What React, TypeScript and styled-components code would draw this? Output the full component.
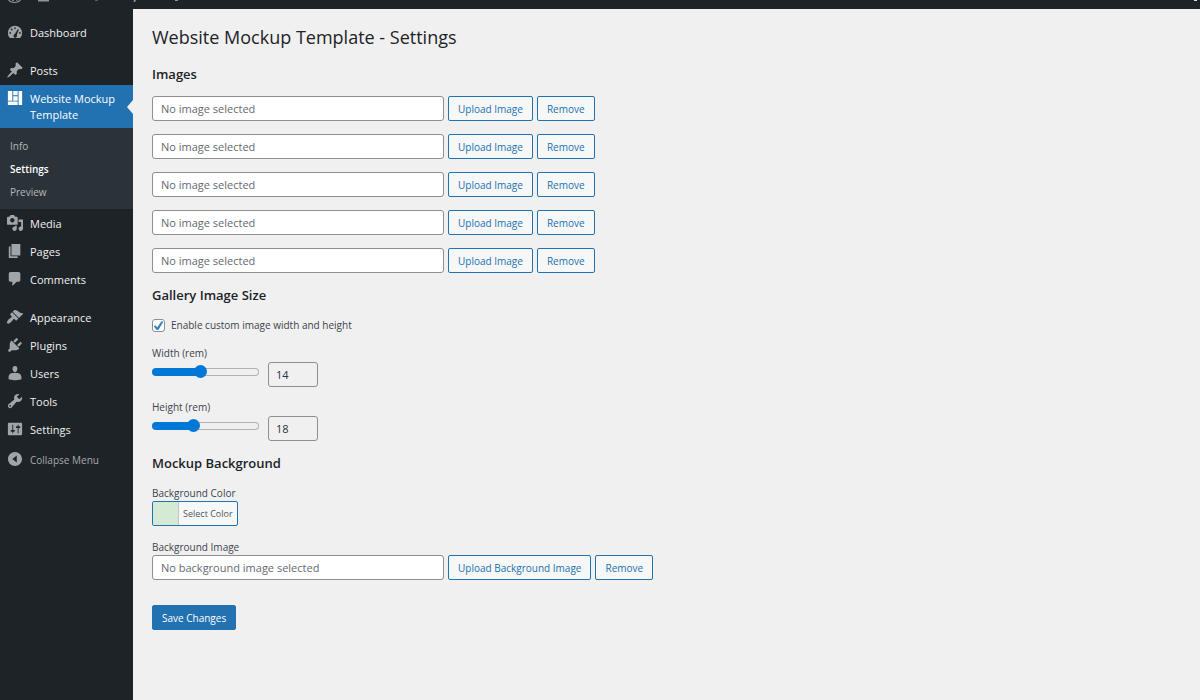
import React, { useState } from 'react';
import styled, { createGlobalStyle, css } from 'styled-components';

const GlobalStyle = createGlobalStyle`
  *, *::before, *::after { box-sizing: border-box; }
  body {
    margin: 0;
    background: #f0f0f1;
    color: #3c434a;
    font: 10px/16px "Segoe UI", "Open Sans", "Noto Sans", sans-serif;
  }
  button, input { font: inherit; color: inherit; }
`;

const Page = styled.div`
  min-height: 100vh;
  display: flex;
  flex-direction: column;
`;

const AdminBar = styled.header`
  height: 9px;
  flex: none;
  display: flex;
  justify-content: space-between;
  overflow: hidden;
  background: #1d2327;
`;

const BarArt = styled.svg`
  display: block;
  height: 9px;
`;

const Body = styled.div`
  flex: 1;
  display: flex;
`;

const Sidebar = styled.nav`
  width: 133px;
  flex: none;
  display: flex;
  flex-direction: column;
  gap: 10px;
  padding-top: 10px;
  background: #1d2327;
`;

const MenuGroup = styled.ul`
  margin: 0;
  padding: 0;
  list-style: none;
`;

const menuLook = css`
  position: relative;
  display: flex;
  align-items: flex-start;
  gap: 7px;
  width: 100%;
  border: 0;
  text-align: left;
  text-decoration: none;
  line-height: 16px;
`;

const MenuLink = styled.a<{ $current?: boolean }>`
  ${menuLook}
  padding: 6px 7px ${(p) => (p.$current ? 5 : 6)}px;
  font-size: 11px;
  color: ${(p) => (p.$current ? '#fff' : '#f0f0f1')};
  background: ${(p) => (p.$current ? '#2271b1' : 'transparent')};
  &::after {
    content: '';
    display: ${(p) => (p.$current ? 'block' : 'none')};
    position: absolute;
    right: 0;
    top: 50%;
    margin-top: -7px;
    border: 7px solid transparent;
    border-left: 0;
    border-right: 6px solid #f0f0f1;
  }
`;

const CollapseButton = styled.button`
  ${menuLook}
  padding: 8px 7px;
  font-size: 10px;
  color: #a7aaad;
  background: transparent;
`;

const MenuIcon = styled.svg<{ $bright?: boolean }>`
  width: 16px;
  height: 16px;
  flex: none;
  margin-top: -1px;
  fill: ${(p) => (p.$bright ? '#fff' : '#a0a5aa')};
`;

const SubMenu = styled.ul`
  margin: 0 0 1px;
  padding: 7px 0 5px;
  list-style: none;
  background: #2c3338;
`;

const SubLink = styled.a<{ $current?: boolean }>`
  display: block;
  padding: 4px 10px;
  line-height: 15px;
  color: ${(p) => (p.$current ? '#fff' : '#b4b9be')};
  font-weight: ${(p) => (p.$current ? 600 : 400)};
  text-decoration: none;
`;

const Main = styled.main`
  flex: 1;
  min-width: 0;
  padding: 16px 19px;
`;

const Title = styled.h1`
  margin: 0 0 15px;
  color: #1d2327;
  font-size: 18px;
  font-weight: 400;
  line-height: 24px;
`;

const SectionTitle = styled.h2`
  margin: 12px 0;
  color: #1d2327;
  font-size: 13px;
  font-weight: 600;
  line-height: 20px;
`;

const Fields = styled.div<{ $gap: number }>`
  display: flex;
  flex-direction: column;
  align-items: flex-start;
  gap: ${(p) => p.$gap}px;
`;

const Row = styled.div`
  display: flex;
  gap: 4px;
`;

const TextBox = styled.input`
  width: 292px;
  height: 25px;
  padding: 0 8px;
  border: 1px solid #8c8f94;
  border-radius: 3px;
  background: #fff;
  color: #2c3338;
  font-size: 11px;
  &::placeholder { color: #646970; opacity: 1; }
`;

const Button = styled.button<{ $primary?: boolean }>`
  height: 25px;
  padding: 0 9px;
  border: 1px solid #2271b1;
  border-radius: 2px;
  background: ${(p) => (p.$primary ? '#2271b1' : '#f6f7f7')};
  color: ${(p) => (p.$primary ? '#fff' : '#2271b1')};
  white-space: nowrap;
`;

const CheckLabel = styled.label`
  display: flex;
  align-items: center;
  gap: 6px;
`;

const CheckBox = styled.input`
  appearance: none;
  width: 13px;
  height: 13px;
  margin: 0;
  border: 1px solid #8c8f94;
  border-radius: 3px;
  background: #fff;
  &:checked {
    background: #fff url("data:image/svg+xml,%3Csvg xmlns='http://www.w3.org/2000/svg' viewBox='0 0 20 20'%3E%3Cpath d='M14.8 3.1l2.5 1.4-7.6 12.6H7.1l-4.2-5.4 2.1-1.9 3.2 3z' fill='%233582c4'/%3E%3C/svg%3E") center / 13px no-repeat;
  }
`;

const Field = styled.div`
  display: flex;
  flex-direction: column;
  align-items: flex-start;
`;

const Slider = styled.input<{ $fill: number }>`
  appearance: none;
  width: 107px;
  height: 14px;
  margin: 4px 0 0;
  background: transparent;
  &::-webkit-slider-runnable-track {
    height: 8px;
    border: 1px solid transparent;
    border-radius: 4px;
    background:
      linear-gradient(#0078d7, #0078d7) left / ${(p) => p.$fill}% 100% no-repeat border-box,
      linear-gradient(#efefef, #efefef) padding-box,
      linear-gradient(#b2b2b2, #b2b2b2) border-box;
  }
  &::-webkit-slider-thumb {
    appearance: none;
    width: 13px;
    height: 13px;
    margin-top: -4px;
    border-radius: 50%;
    background: #0078d7;
  }
`;

const SliderRow = styled.div`
  display: flex;
  align-items: flex-start;
  gap: 9px;
`;

const NumberBox = styled.input`
  width: 50px;
  height: 25px;
  margin-top: 1px;
  padding: 0 7px;
  border: 1px solid #8c8f94;
  border-radius: 3px;
  background: #f0f0f1;
  color: #2c3338;
  font-size: 11px;
`;

const ColorButton = styled.button`
  display: flex;
  height: 25px;
  padding: 0;
  overflow: hidden;
  border: 1px solid #2271b1;
  border-radius: 2px;
  background: #f6f7f7;
  color: #50575e;
  font-size: 9px;
  line-height: 23px;
`;

const Swatch = styled.span`
  width: 25px;
  height: 23px;
  background: #d4ead4;
`;

const ColorText = styled.span`
  padding: 0 4px;
  border-left: 1px solid #c3c4c7;
`;

const Submit = styled.div`
  margin-top: 25px;
`;

const icons = {
  dashboard:
    'M4.3 16.800h11.400A8 8 0 0 0 18 11a8 8 0 0 0-16 0 8 8 0 0 0 2.300 5.800zM10 4.600a1 1 0 1 1 0 2 1 1 0 0 1 0-2zM6.300 6.200a1 1 0 1 1 0 2 1 1 0 0 1 0-2zM13.400 6.600l.9.5-2.300 6.300a2 2 0 1 1-2.400-.9zM4.600 10a1 1 0 1 1 0 2 1 1 0 0 1 0-2zM15.500 10a1 1 0 1 1 0 2 1 1 0 0 1 0-2z',
  posts:
    'M10.44 3.02l1.82-1.82 6.36 6.35-1.83 1.82c-1.05-.68-2.48-.57-3.41.36l-.75.75c-.92.93-1.04 2.35-.35 3.41l-1.83 1.82-2.41-2.41-2.8 2.79c-.42.42-3.38 2.71-3.8 2.29s1.86-3.39 2.28-3.81l2.79-2.79L4.1 9.36l1.83-1.82c1.05.69 2.48.57 3.4-.36l.75-.75c.93-.92 1.05-2.35.36-3.41z',
  layout: 'M2 2h5v11H2V2zm6 0h5v5H8V2zm6 0h4v16h-4V2zM8 8h5v5H8V8zm-6 6h11v4H2v-4z',
  media:
    'M13 11V4c0-.55-.45-1-1-1h-1.67L9 1H5L3.67 3H2c-.55 0-1 .45-1 1v7c0 .55.45 1 1 1h10c.55 0 1-.45 1-1zM7 4.5c1.38 0 2.5 1.12 2.5 2.5S8.38 9.5 7 9.5 4.5 8.38 4.5 7 5.62 4.5 7 4.5zM14 6h5v10.5c0 1.38-1.12 2.5-2.5 2.5S14 17.88 14 16.5s1.12-2.5 2.5-2.5c.17 0 .34.02.5.05V9h-3V6zm-4 8.05V13h2v3.5c0 1.38-1.12 2.5-2.5 2.5S7 17.88 7 16.5 8.12 14 9.5 14c.17 0 .34.02.5.05z',
  pages: 'M6 15V2h10v13H6zm-1 1h8v2H3V5h2v11z',
  comments: 'M5 2h9c1.1 0 2 .9 2 2v7c0 1.1-.9 2-2 2h-2l-5 5v-5H5c-1.1 0-2-.9-2-2V4c0-1.1.9-2 2-2z',
  appearance:
    'M14.48 11.06L7.41 3.99l1.5-1.5c.5-.56 2.3-.47 3.51.32 1.21.8 1.43 1.28 2.91 2.1 1.18.64 2.45 1.26 4.45.85zm-.71.71L6.7 4.7 4.93 6.47c-.39.39-.39 1.02 0 1.41l1.06 1.06c.39.39.39 1.03 0 1.42-.6.6-1.43 1.11-2.21 1.69-.35.26-.7.53-1.01.84C1.43 14.23.4 16.08 1.4 17.07c.99 1 2.84-.03 4.18-1.36.31-.31.58-.66.85-1.02.57-.78 1.08-1.61 1.69-2.21.39-.39 1.02-.39 1.41 0l1.06 1.06c.39.39 1.02.39 1.41 0z',
  plugins:
    'M13.11 4.36L9.87 7.6 8 5.73l3.24-3.24c.35-.34 1.05-.2 1.56.32.52.51.66 1.21.31 1.55zm-8 1.77l.91-1.12 9.01 9.01-1.19.84c-.71.71-2.63 1.16-3.82 1.16H6.14L4.9 17.26c-.59.59-1.54.59-2.12 0-.59-.58-.59-1.53 0-2.12l1.24-1.24v-3.88c0-1.13.4-3.19 1.09-3.89zm7.26 3.97l3.24-3.24c.34-.35 1.04-.21 1.55.31.52.51.66 1.21.31 1.55l-3.24 3.25z',
  users:
    'M10 9.25c-2.27 0-2.73-3.44-2.73-3.44C7 4.02 7.82 2 9.97 2c2.16 0 2.98 2.02 2.71 3.81 0 0-.41 3.44-2.68 3.44zM7.230 10h5.490c2.390 0 4.520 2.330 4.520 4.530v2.490s-3.650 1.130-7.240 1.130c-3.650 0-7.240-1.130-7.240-1.130v-2.490c0-2.250 1.940-4.480 4.470-4.480z',
  tools:
    'M16.68 9.77c-1.34 1.34-3.3 1.67-4.95.99l-5.41 6.52c-.99.99-2.59.99-3.58 0s-.99-2.59 0-3.57l6.52-5.42c-.68-1.65-.35-3.61.99-4.95 1.28-1.28 3.12-1.62 4.72-1.06l-2.89 2.89 2.82 2.82 2.86-2.87c.53 1.58.18 3.39-1.08 4.65zM3.81 16.21c.4.39 1.04.39 1.43 0 .4-.4.4-1.04 0-1.43-.39-.4-1.03-.4-1.43 0-.39.39-.39 1.03 0 1.43z',
  settings:
    'M18 16V4c0-.55-.45-1-1-1H3c-.55 0-1 .45-1 1v12c0 .55.45 1 1 1h14c.55 0 1-.45 1-1zM8 11h1c.55 0 1 .45 1 1s-.45 1-1 1H8v1.5c0 .28-.22.5-.5.5s-.5-.22-.5-.5V13H6c-.55 0-1-.45-1-1s.45-1 1-1h1V5.5c0-.28.22-.5.5-.5s.5.22.5.5V11zm5-2h-1c-.55 0-1-.45-1-1s.45-1 1-1h1V5.5c0-.28.22-.5.5-.5s.5.22.5.5V7h1c.55 0 1 .45 1 1s-.45 1-1 1h-1v5.5c0 .28-.22.5-.5.5s-.5-.22-.5-.5V9z',
  collapse:
    'M10 2.16c4.33 0 7.84 3.51 7.84 7.84s-3.51 7.84-7.84 7.84S2.16 14.33 2.16 10 5.67 2.16 10 2.16zM12 14V6l-5 4z',
};

type IconName = keyof typeof icons;

const Icon = ({ name, bright }: { name: IconName; bright?: boolean }) => (
  <MenuIcon viewBox="1 1 18 18" $bright={bright} aria-hidden="true">
    <path fillRule="evenodd" d={icons[name]} />
  </MenuIcon>
);

type MenuEntry = { label: string; icon: IconName; sub?: string[] };

const menuGroups: { last?: boolean; items: MenuEntry[] }[] = [
  { items: [{ label: 'Dashboard', icon: 'dashboard' }] },
  {
    items: [
      { label: 'Posts', icon: 'posts' },
      { label: 'Website Mockup Template', icon: 'layout', sub: ['Info', 'Settings', 'Preview'] },
      { label: 'Media', icon: 'media' },
      { label: 'Pages', icon: 'pages' },
      { label: 'Comments', icon: 'comments' },
    ],
  },
  {
    last: true,
    items: [
      { label: 'Appearance', icon: 'appearance' },
      { label: 'Plugins', icon: 'plugins' },
      { label: 'Users', icon: 'users' },
      { label: 'Tools', icon: 'tools' },
      { label: 'Settings', icon: 'settings' },
    ],
  },
];

const RangeField = (props: { id: string; label: string; initial: number; min: number; max: number }) => {
  const [value, setValue] = useState(props.initial);
  return (
    <Field>
      <label htmlFor={props.id}>{props.label}</label>
      <SliderRow>
        <Slider
          id={props.id}
          type="range"
          min={props.min}
          max={props.max}
          value={value}
          $fill={((value - props.min) / (props.max - props.min)) * 100}
          onChange={(e) => setValue(Number(e.target.value))}
        />
        <NumberBox aria-label={props.label} readOnly value={value} />
      </SliderRow>
    </Field>
  );
};

export default function App() {
  return (
    <Page>
      <GlobalStyle />
      <AdminBar>
        <BarArt width="200" viewBox="0 0 200 9" aria-hidden="true">
          <g fill="#8f959a">
            <path d="M8 0c1 2 3.500 3 6.500 3s5.500-1 6.500-3h-1.500c-1 1.300-2.800 2-5 2s-4-.7-5-2z" />
            <path d="M12 0h2l-.5 1.300h-1zM16 0h2l-1 1.300z" />
            <path d="M38 0h11v1.500H38z" />
            <path d="M134 0h2l-1 2h-1.500z" />
            <path d="M175 0h3v1h-3z" />
            <path d="M95 0h3v1h-3z" opacity=".5" />
          </g>
        </BarArt>
        <BarArt width="8" viewBox="0 0 8 9" aria-hidden="true">
          <path d="M2 0h3v1H2z" fill="#dcdcde" />
        </BarArt>
      </AdminBar>
      <Body>
        <Sidebar aria-label="Main menu">
          {menuGroups.map((group, i) => (
            <MenuGroup key={i}>
              {group.items.map((m) => (
                <li key={m.label}>
                  <MenuLink href="#" $current={!!m.sub}>
                    <Icon name={m.icon} bright={!!m.sub} />
                    {m.label}
                  </MenuLink>
                  {m.sub && (
                    <SubMenu>
                      {m.sub.map((s) => (
                        <li key={s}>
                          <SubLink href="#" $current={s === 'Settings'}>{s}</SubLink>
                        </li>
                      ))}
                    </SubMenu>
                  )}
                </li>
              ))}
              {group.last && (
                <li>
                  <CollapseButton type="button">
                    <Icon name="collapse" />
                    Collapse Menu
                  </CollapseButton>
                </li>
              )}
            </MenuGroup>
          ))}
        </Sidebar>
        <Main>
          <Title>Website Mockup Template - Settings</Title>
          <SectionTitle>Images</SectionTitle>
          <Fields $gap={13}>
            {[1, 2, 3, 4, 5].map((n) => (
              <Row key={n}>
                <TextBox aria-label={`Image ${n}`} placeholder="No image selected" readOnly />
                <Button type="button">Upload Image</Button>
                <Button type="button">Remove</Button>
              </Row>
            ))}
          </Fields>
          <SectionTitle>Gallery Image Size</SectionTitle>
          <Fields $gap={12}>
            <CheckLabel>
              <CheckBox type="checkbox" defaultChecked />
              Enable custom image width and height
            </CheckLabel>
            <RangeField id="width" label="Width (rem)" initial={14} min={5} max={25} />
            <RangeField id="height" label="Height (rem)" initial={18} min={5} max={40} />
          </Fields>
          <SectionTitle>Mockup Background</SectionTitle>
          <Fields $gap={13}>
            <Field>
              <span>Background Color</span>
              <ColorButton type="button">
                <Swatch />
                <ColorText>Select Color</ColorText>
              </ColorButton>
            </Field>
            <Field>
              <label htmlFor="bg-image">Background Image</label>
              <Row>
                <TextBox id="bg-image" placeholder="No background image selected" readOnly />
                <Button type="button">Upload Background Image</Button>
                <Button type="button">Remove</Button>
              </Row>
            </Field>
          </Fields>
          <Submit>
            <Button type="submit" $primary>Save Changes</Button>
          </Submit>
        </Main>
      </Body>
    </Page>
  );
}
